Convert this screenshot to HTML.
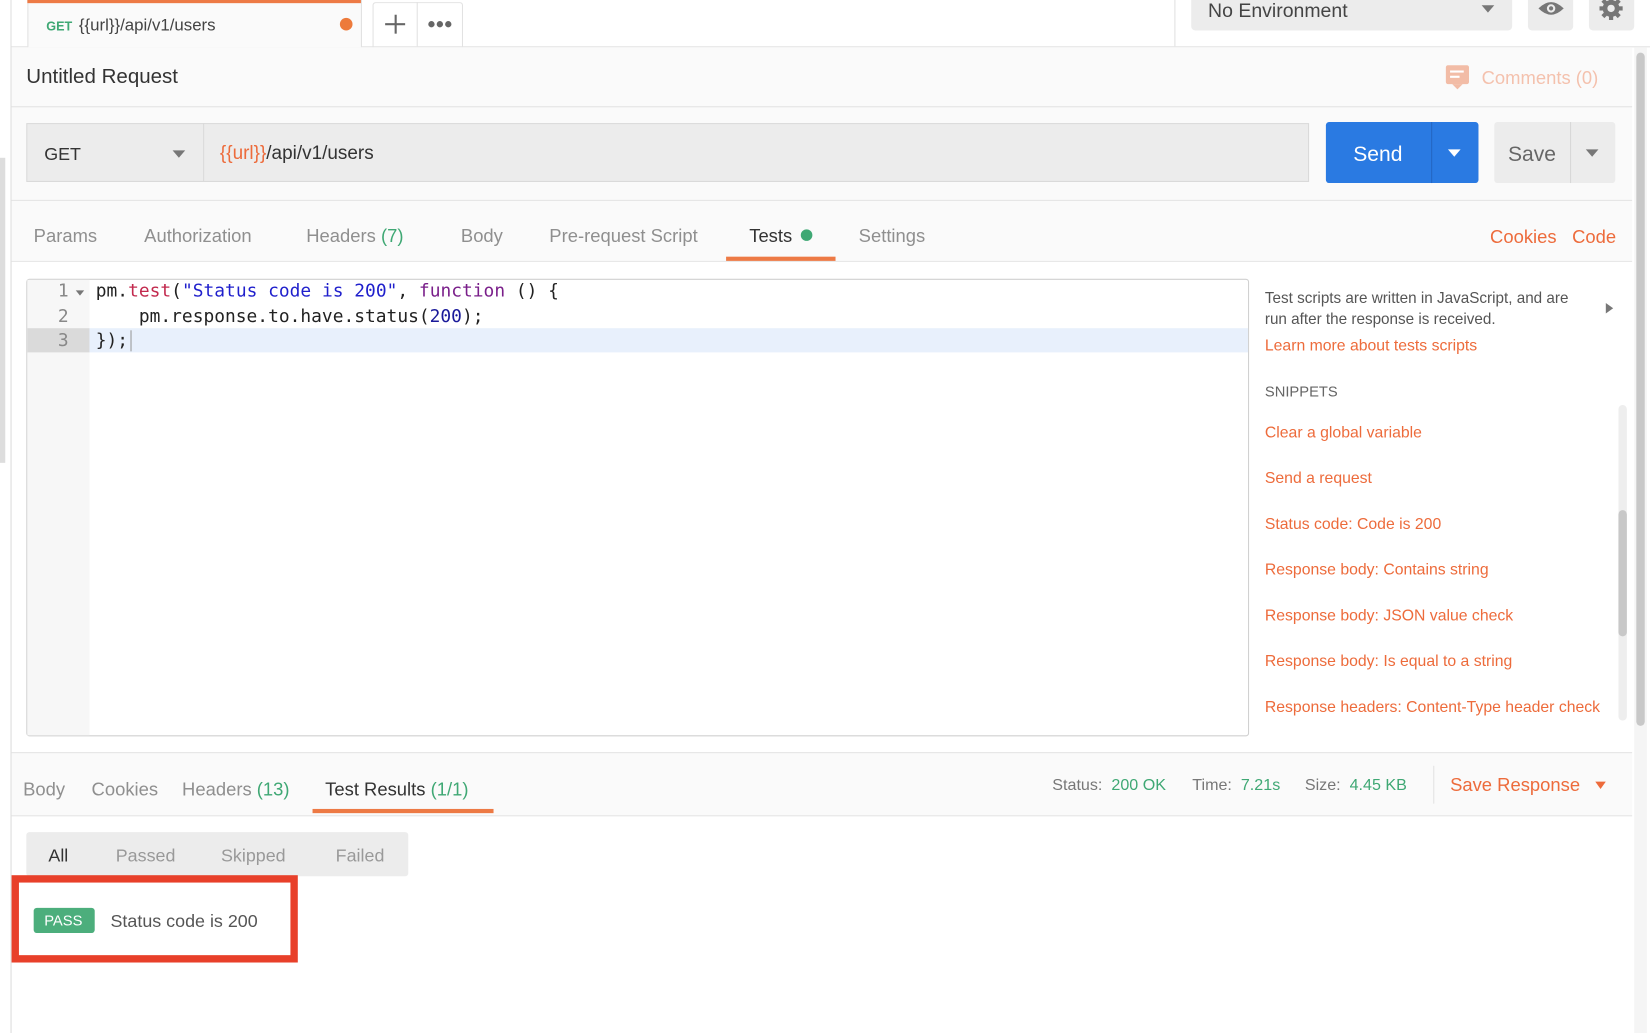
<!DOCTYPE html>
<html><head><meta charset="utf-8"><style>
html,body{margin:0;padding:0;width:1650px;height:1033px;overflow:hidden;background:#fff}
#w{position:absolute;left:0;top:0;width:1568px;height:982px;transform:scale(1.05230,1.05193);transform-origin:0 0;font-family:"Liberation Sans",sans-serif;color:#505050;background:#fff}
.a{position:absolute}
.t{position:absolute;white-space:nowrap}
.g{color:#3fa874}
.o{color:#ed6b3b}
.tab{font-size:17.5px;color:#8f8f8f;top:214px}
.rt{font-size:17.5px;color:#8f8f8f;top:740px}
.sn{font-size:15px;color:#ed6b3b;left:1202px}
.mono{font-family:"DejaVu Sans Mono","Liberation Mono",monospace;font-size:17px;color:#222;white-space:pre}
</style></head><body><div id="w">
<div class="a" style="left:0;top:0;width:10px;height:982px;background:#fff;border-right:1px solid #dcdcdc"></div>
<div class="a" style="left:0;top:150px;width:5px;height:290px;background:#ddd"></div>
<div class="a" style="left:11px;top:0;width:1557px;height:44px;background:#fff;border-bottom:1px solid #e2e2e2"></div>
<div class="a" style="left:26px;top:0;width:316px;height:45px;background:#fafafa;border-right:1px solid #e2e2e2;border-left:1px solid #e2e2e2"></div>
<div class="a" style="left:26px;top:0;width:317px;height:3px;background:#ed7a45"></div>
<div class="t" style="left:44px;top:18px;font-size:12px;font-weight:bold;color:#3fa874">GET</div>
<div class="t" style="left:75px;top:16px;font-size:16px;color:#444">{{url}}/api/v1/users</div>
<div class="a" style="left:323px;top:17px;width:12px;height:12px;border-radius:50%;background:#ed7a3b"></div>
<div class="a" style="left:354px;top:2px;width:84px;height:42px;border:1px solid #e2e2e2;border-bottom:none;border-radius:3px 3px 0 0"></div>
<div class="a" style="left:396px;top:2px;width:1px;height:42px;background:#e2e2e2"></div>
<div class="a" style="left:366px;top:22px;width:19px;height:2px;background:#666"></div>
<div class="a" style="left:374.5px;top:14px;width:2px;height:18px;background:#666"></div>
<div class="a" style="left:407px;top:20px;width:6px;height:6px;border-radius:50%;background:#666"></div>
<div class="a" style="left:415px;top:20px;width:6px;height:6px;border-radius:50%;background:#666"></div>
<div class="a" style="left:423px;top:20px;width:6px;height:6px;border-radius:50%;background:#666"></div>
<div class="a" style="left:1116px;top:0;width:1px;height:44px;background:#e2e2e2"></div>
<div class="a" style="left:1132px;top:0;width:305px;height:29px;background:#ececec;border-radius:0 0 4px 4px"></div>
<div class="t" style="left:1148px;top:-1px;font-size:18.5px;color:#444">No Environment</div>
<div class="a" style="left:1408px;top:5px;border-left:6px solid transparent;border-right:6px solid transparent;border-top:7px solid #777"></div>
<div class="a" style="left:1452px;top:0;width:43px;height:29px;background:#ececec;border-radius:0 0 4px 4px"></div>
<svg class="a" style="left:1461px;top:0" width="26" height="18"><path d="M1 8 Q13 -4 25 8 Q13 20 1 8Z" fill="#777"/><circle cx="13" cy="8" r="4" fill="#ececec"/><circle cx="13" cy="8" r="2" fill="#777"/></svg>
<div class="a" style="left:1510px;top:0;width:43px;height:29px;background:#ececec;border-radius:0 0 4px 4px"></div>
<svg class="a" style="left:1519px;top:-4px" width="24" height="24" viewBox="0 0 24 24"><g fill="#777"><circle cx="12" cy="12" r="8"/><rect x="10" y="1" width="4" height="22"/><rect x="1" y="10" width="22" height="4"/><rect x="10" y="1" width="4" height="22" transform="rotate(45 12 12)"/><rect x="10" y="1" width="4" height="22" transform="rotate(-45 12 12)"/></g><circle cx="12" cy="12" r="3.5" fill="#ececec"/></svg>
<div class="a" style="left:11px;top:45px;width:1540px;height:145px;background:#fafafa"></div>
<div class="t" style="left:25px;top:62px;font-size:19.5px;color:#333">Untitled Request</div>
<div class="a" style="left:1374px;top:62px;width:22px;height:18px;background:#f2bca6;border-radius:2px"></div>
<div class="a" style="left:1380px;top:80px;border-left:5px solid transparent;border-right:5px solid transparent;border-top:5px solid #f2bca6"></div>
<div class="a" style="left:1378px;top:67px;width:13px;height:2px;background:#fff"></div>
<div class="a" style="left:1378px;top:72px;width:9px;height:2px;background:#fff"></div>
<div class="t" style="left:1408px;top:64px;font-size:17.5px;color:#f4c1ad">Comments (0)</div>
<div class="a" style="left:11px;top:101px;width:1540px;height:1px;background:#e2e2e2"></div>
<div class="a" style="left:25px;top:117px;width:1219px;height:56px;background:#ececec;border:1px solid #dadada;box-sizing:border-box"></div>
<div class="a" style="left:193px;top:117px;width:1px;height:56px;background:#dadada"></div>
<div class="t" style="left:42px;top:137px;font-size:17px;color:#333">GET</div>
<div class="a" style="left:164px;top:143px;border-left:6px solid transparent;border-right:6px solid transparent;border-top:7px solid #777"></div>
<div class="t" style="left:209px;top:135px;font-size:18px;color:#333"><span class="o">{{url}}</span>/api/v1/users</div>
<div class="a" style="left:1260px;top:116px;width:145px;height:58px;background:#2a7ae2;border-radius:3px"></div>
<div class="a" style="left:1360px;top:116px;width:1px;height:58px;background:#2466c2"></div>
<div class="t" style="left:1286px;top:136px;font-size:20px;color:#fff">Send</div>
<div class="a" style="left:1376px;top:142px;border-left:6px solid transparent;border-right:6px solid transparent;border-top:7px solid #fff"></div>
<div class="a" style="left:1420px;top:116px;width:115px;height:58px;background:#ececec;border-radius:3px"></div>
<div class="a" style="left:1492px;top:116px;width:1px;height:58px;background:#d8d8d8"></div>
<div class="t" style="left:1433px;top:136px;font-size:20px;color:#666">Save</div>
<div class="a" style="left:1507px;top:142px;border-left:6px solid transparent;border-right:6px solid transparent;border-top:7px solid #777"></div>
<div class="a" style="left:11px;top:190px;width:1540px;height:1px;background:#e2e2e2"></div>
<div class="a" style="left:11px;top:191px;width:1540px;height:57px;background:#fafafa;border-bottom:1px solid #e6e6e6"></div>
<div class="t tab" style="left:32px">Params</div>
<div class="t tab" style="left:137px">Authorization</div>
<div class="t tab" style="left:291px">Headers <span class="g">(7)</span></div>
<div class="t tab" style="left:438px">Body</div>
<div class="t tab" style="left:522px">Pre-request Script</div>
<div class="t tab" style="left:712px;color:#333">Tests</div>
<div class="a" style="left:761px;top:218px;width:11px;height:11px;border-radius:50%;background:#3fa874"></div>
<div class="t tab" style="left:816px">Settings</div>
<div class="a" style="left:690px;top:244px;width:104px;height:4px;background:#ed7a45"></div>
<div class="t tab" style="left:1416px;color:#ed6b3b;top:215px">Cookies</div>
<div class="t tab" style="left:1494px;color:#ed6b3b;top:215px">Code</div>
<div class="a" style="left:25px;top:265px;width:1162px;height:435px;border:1px solid #d0d0d0;box-sizing:border-box;border-radius:3px;background:#fff"></div>
<div class="a" style="left:26px;top:266px;width:59px;height:433px;background:#f7f7f7"></div>
<div class="a" style="left:85px;top:312px;width:1101px;height:23px;background:#e8f0fc"></div>
<div class="a" style="left:26px;top:312px;width:59px;height:23px;background:#dadada"></div>
<div class="t mono" style="left:55px;top:267px;color:#888">1</div>
<div class="a" style="left:72px;top:276px;border-left:4px solid transparent;border-right:4px solid transparent;border-top:5px solid #777"></div>
<div class="t mono" style="left:55px;top:291px;color:#888">2</div>
<div class="t mono" style="left:55px;top:314px;color:#888">3</div>
<div class="t mono" style="left:91px;top:267px">pm.<span style="color:#c22a4e">test</span>(<span style="color:#1f1fcc">"Status code is 200"</span>, <span style="color:#7a1f8a">function</span> () {</div>
<div class="t mono" style="left:91px;top:291px">    pm.response.to.have.status(<span style="color:#1a1a9a">200</span>);</div>
<div class="t mono" style="left:91px;top:314px">});</div>
<div class="a" style="left:124px;top:314px;width:1px;height:20px;background:#999"></div>
<div class="t" style="left:1202px;top:274px;font-size:14.5px;color:#555;line-height:20px">Test scripts are written in JavaScript, and are<br>run after the response is received.</div>
<div class="a" style="left:1526px;top:288px;border-top:5px solid transparent;border-bottom:5px solid transparent;border-left:7px solid #777"></div>
<div class="t sn" style="top:320px">Learn more about tests scripts</div>
<div class="t" style="left:1202px;top:364px;font-size:14px;color:#666">SNIPPETS</div>
<div class="t sn" style="top:403px">Clear a global variable</div>
<div class="t sn" style="top:446px">Send a request</div>
<div class="t sn" style="top:490px">Status code: Code is 200</div>
<div class="t sn" style="top:533px">Response body: Contains string</div>
<div class="t sn" style="top:577px">Response body: JSON value check</div>
<div class="t sn" style="top:620px">Response body: Is equal to a string</div>
<div class="t sn" style="top:664px">Response headers: Content-Type header check</div>
<div class="a" style="left:1538px;top:385px;width:8px;height:300px;background:#eee;border-radius:4px"></div>
<div class="a" style="left:1538px;top:485px;width:8px;height:120px;background:#c8c8c8;border-radius:4px"></div>
<div class="a" style="left:11px;top:715px;width:1540px;height:59px;background:#fafafa;border-top:1px solid #e4e4e4;border-bottom:1px solid #e4e4e4"></div>
<div class="t rt" style="left:22px">Body</div>
<div class="t rt" style="left:87px">Cookies</div>
<div class="t rt" style="left:173px">Headers <span class="g">(13)</span></div>
<div class="t rt" style="left:309px;color:#333">Test Results <span class="g">(1/1)</span></div>
<div class="a" style="left:297px;top:769px;width:172px;height:4px;background:#ed7a45"></div>
<div class="t" style="left:1000px;top:738px;font-size:15.3px;color:#777">Status: <span class="g">&nbsp;200 OK</span></div>
<div class="t" style="left:1133px;top:738px;font-size:15.3px;color:#777">Time: <span class="g">&nbsp;7.21s</span></div>
<div class="t" style="left:1240px;top:738px;font-size:15.3px;color:#777">Size: <span class="g">&nbsp;4.45 KB</span></div>
<div class="a" style="left:1362px;top:728px;width:1px;height:36px;background:#e2e2e2"></div>
<div class="t" style="left:1378px;top:736px;font-size:17.5px;color:#ed6b3b">Save Response</div>
<div class="a" style="left:1516px;top:743px;border-left:5px solid transparent;border-right:5px solid transparent;border-top:7px solid #ed6b3b"></div>
<div class="a" style="left:25px;top:791px;width:363px;height:42px;background:#ececec;border-radius:3px"></div>
<div class="t" style="left:46px;top:804px;font-size:17px;color:#333">All</div>
<div class="t" style="left:110px;top:804px;font-size:17px;color:#999">Passed</div>
<div class="t" style="left:210px;top:804px;font-size:17px;color:#999">Skipped</div>
<div class="t" style="left:319px;top:804px;font-size:17px;color:#999">Failed</div>
<div class="a" style="left:11px;top:832px;width:272px;height:83px;border:7px solid #e8402a;box-sizing:border-box"></div>
<div class="a" style="left:32px;top:863px;width:58px;height:24px;background:#4cae7c;border-radius:3px"></div>
<div class="t" style="left:42px;top:867px;font-size:14px;color:#fff">PASS</div>
<div class="t" style="left:105px;top:866px;font-size:17px;color:#555">Status code is 200</div>
<div class="a" style="left:1553px;top:45px;width:12px;height:937px;background:#f5f5f5"></div>
<div class="a" style="left:1555px;top:50px;width:8px;height:640px;background:#c8c8c8;border-radius:4px"></div>
</div></body></html>
